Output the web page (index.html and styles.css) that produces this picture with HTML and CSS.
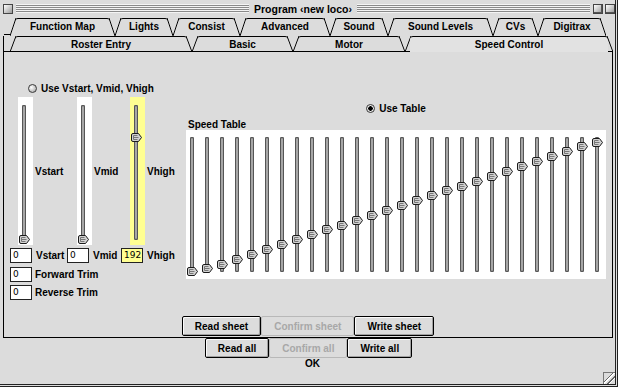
FILE: index.html
```html
<!DOCTYPE html>
<html lang="en">
<head>
  <meta charset="UTF-8">
  <title>Program ‹new loco›</title>
  <link rel="stylesheet" href="styles.css">
</head>
<body>
<svg class="defs" aria-hidden="true">
  <symbol id="thumb" viewBox="0 0 11 9">
    <path d="M0.5 2 Q0.5 0.5 2 0.5 H7.5 L10.5 4.5 L7.5 8.5 H2 Q0.5 8.5 0.5 7 Z" fill="#d2d2d2" stroke="#1a1a1a"/>
    <path d="M2.5 2.5 H6.5 M2.5 4.5 H7.5 M2.5 6.5 H6.5 M2.5 2.5 V6.5" stroke="#777" fill="none"/>
  </symbol>
</svg>

<div class="window">
  <div class="titlebar">
    <span class="close-box"></span>
    <span class="stripes"></span>
    <span class="title">Program ‹new loco›</span>
    <span class="stripes"></span>
    <span class="zoom-box"></span>
    <span class="collapse-box"></span>
  </div>

  <div class="tab-row back">
    <div class="tab"><span>Function Map</span></div>
    <div class="tab"><span>Lights</span></div>
    <div class="tab"><span>Consist</span></div>
    <div class="tab"><span>Advanced</span></div>
    <div class="tab"><span>Sound</span></div>
    <div class="tab"><span>Sound Levels</span></div>
    <div class="tab"><span>CVs</span></div>
    <div class="tab"><span>Digitrax</span></div>
  </div>
  <div class="tab-row front">
    <div class="tab"><span>Roster Entry</span></div>
    <div class="tab"><span>Basic</span></div>
    <div class="tab"><span>Motor</span></div>
    <div class="tab active"><span>Speed Control</span></div>
  </div>

  <div class="panel">
    <div class="panel-body">
      <div class="vcontrols">
        <div class="radio"><span class="radio-dot"></span>Use Vstart, Vmid, Vhigh</div>

        <div class="vsliders">
          <div class="slider-box"><div class="track"><svg class="thumb" style="top:130px"><use href="#thumb"/></svg></div></div>
          <span class="slider-label">Vstart</span>
          <div class="slider-box"><div class="track"><svg class="thumb" style="top:130px"><use href="#thumb"/></svg></div></div>
          <span class="slider-label">Vmid</span>
          <div class="slider-box high"><div class="track"><svg class="thumb" style="top:28px"><use href="#thumb"/></svg></div></div>
          <span class="slider-label">Vhigh</span>
        </div>

        <div class="field-row">
          <span class="field">0</span><span class="field-label">Vstart</span>
          <span class="field">0</span><span class="field-label">Vmid</span>
          <span class="field high">192</span><span class="field-label">Vhigh</span>
        </div>
        <div class="trim-row"><span class="field">0</span><span class="field-label">Forward Trim</span></div>
        <div class="trim-row reverse"><span class="field">0</span><span class="field-label">Reverse Trim</span></div>
      </div>

      <div class="table-col">
        <div class="radio centered"><span class="radio-dot on"></span>Use Table</div>
        <div class="table-title">Speed Table</div>
        <div class="table-box">
          <div class="track"><svg class="thumb" style="top:130px"><use href="#thumb"/></svg></div>
          <div class="track"><svg class="thumb" style="top:127px"><use href="#thumb"/></svg></div>
          <div class="track"><svg class="thumb" style="top:123px"><use href="#thumb"/></svg></div>
          <div class="track"><svg class="thumb" style="top:118px"><use href="#thumb"/></svg></div>
          <div class="track"><svg class="thumb" style="top:113px"><use href="#thumb"/></svg></div>
          <div class="track"><svg class="thumb" style="top:108px"><use href="#thumb"/></svg></div>
          <div class="track"><svg class="thumb" style="top:103px"><use href="#thumb"/></svg></div>
          <div class="track"><svg class="thumb" style="top:98px"><use href="#thumb"/></svg></div>
          <div class="track"><svg class="thumb" style="top:93px"><use href="#thumb"/></svg></div>
          <div class="track"><svg class="thumb" style="top:88px"><use href="#thumb"/></svg></div>
          <div class="track"><svg class="thumb" style="top:84px"><use href="#thumb"/></svg></div>
          <div class="track"><svg class="thumb" style="top:79px"><use href="#thumb"/></svg></div>
          <div class="track"><svg class="thumb" style="top:74px"><use href="#thumb"/></svg></div>
          <div class="track"><svg class="thumb" style="top:69px"><use href="#thumb"/></svg></div>
          <div class="track"><svg class="thumb" style="top:64px"><use href="#thumb"/></svg></div>
          <div class="track"><svg class="thumb" style="top:59px"><use href="#thumb"/></svg></div>
          <div class="track"><svg class="thumb" style="top:54px"><use href="#thumb"/></svg></div>
          <div class="track"><svg class="thumb" style="top:49px"><use href="#thumb"/></svg></div>
          <div class="track"><svg class="thumb" style="top:45px"><use href="#thumb"/></svg></div>
          <div class="track"><svg class="thumb" style="top:40px"><use href="#thumb"/></svg></div>
          <div class="track"><svg class="thumb" style="top:35px"><use href="#thumb"/></svg></div>
          <div class="track"><svg class="thumb" style="top:30px"><use href="#thumb"/></svg></div>
          <div class="track"><svg class="thumb" style="top:25px"><use href="#thumb"/></svg></div>
          <div class="track"><svg class="thumb" style="top:20px"><use href="#thumb"/></svg></div>
          <div class="track"><svg class="thumb" style="top:15px"><use href="#thumb"/></svg></div>
          <div class="track"><svg class="thumb" style="top:10px"><use href="#thumb"/></svg></div>
          <div class="track"><svg class="thumb" style="top:5px"><use href="#thumb"/></svg></div>
          <div class="track"><svg class="thumb" style="top:1px"><use href="#thumb"/></svg></div>
        </div>
      </div>
    </div>

    <div class="button-row sheet">
      <button class="btn">Read sheet</button>
      <button class="btn disabled">Confirm sheet</button>
      <button class="btn">Write sheet</button>
    </div>
  </div>

  <div class="button-row all">
    <button class="btn">Read all</button>
    <button class="btn disabled">Confirm all</button>
    <button class="btn">Write all</button>
  </div>
  <div class="ok">OK</div>

  <span class="grip"></span>
</div>
</body>
</html>
```

FILE: styles.css
```css
html, body {
  margin: 0;
  padding: 0;
  background: #dcdcdc;
  overflow: hidden;
  font-family: 'Liberation Sans', Arial, sans-serif;
  font-size: 10px;
  font-weight: bold;
  color: #000;
}
.defs {
  position: absolute;
  width: 0;
  height: 0;
}

.window {
  position: relative;
  width: 618px;
  height: 387px;
  box-sizing: border-box;
  background: #dcdcdc;
  border-right: 3px double #222;
  border-bottom: 3px double #222;
  display: flex;
  flex-direction: column;
}

/* title bar */
.titlebar {
  height: 17px;
  display: flex;
  align-items: center;
  gap: 3px;
  padding: 0 0 0 3px;
}
.close-box, .zoom-box, .collapse-box {
  width: 8px;
  height: 8px;
  border: 1px solid #444;
  background: linear-gradient(135deg, #fff, #9a9a9a);
  flex: none;
}
.zoom-box { box-shadow: inset -3px -3px 0 -2px #555; }
.collapse-box { box-shadow: inset 0 -4px 0 -3px #555; margin-left: -1px; }
.stripes {
  flex: 1;
  height: 9px;
  background: repeating-linear-gradient(to bottom, #f4f4f4 0 1px, #8a8a8a 1px 2px);
}
.title {
  font-size: 10.5px;
  padding: 0 2px;
}

/* tabs */
.tab-row {
  display: grid;
}
.tab-row.back {
  height: 18px;
  margin: 1px 0 0 10px;
  grid-template-columns: 105px 58px 67px 90px 58px 105px 45px 68px;
}
.tab-row.front {
  position: relative;
  height: 15px;
  margin-left: 3px;
  padding-left: 6px;
  border-left: 1px solid #000;
  grid-template-columns: 182px 101px 112px 208px;
}
.tab-row.front::before {
  content: '';
  position: absolute;
  left: 0;
  top: -2px;
  width: 7px;
  height: 1px;
  background: #000;
}
.tab {
  position: relative;
  padding: 0 5px;
}
.tab::before, .tab::after {
  content: '';
  position: absolute;
  top: 0;
  bottom: 0;
  width: 6px;
}
.tab::before {
  left: 0;
  background: linear-gradient(to bottom right, transparent calc(50% - 0.9px), #000 50%, transparent calc(50% + 0.9px));
}
.tab::after {
  right: 0;
  background: linear-gradient(to bottom left, transparent calc(50% - 0.9px), #000 50%, transparent calc(50% + 0.9px));
}
.tab span {
  display: block;
  height: 100%;
  box-sizing: border-box;
  border-top: 1px solid #000;
  border-radius: 3px 3px 0 0;
  text-align: center;
  line-height: 15px;
  white-space: nowrap;
}
.tab.active span {
  position: relative;
  background: #e2e2e2;
}
.tab.active span::after {
  content: '';
  position: absolute;
  left: -4px;
  right: -4px;
  bottom: -1px;
  height: 1px;
  background: #dcdcdc;
}

/* panel */
.panel {
  height: 287px;
  width: 610px;
  box-sizing: border-box;
  margin-left: 3px;
  border: 1px solid #000;
  display: flex;
  flex-direction: column;
}
.panel-body {
  display: grid;
  grid-template-columns: 182px 420px;
}
.vcontrols {
  padding: 31px 0 0 6px;
}
.radio {
  height: 11px;
  display: flex;
  align-items: center;
  gap: 4px;
  margin-left: 18px;
  white-space: nowrap;
}
.radio.centered {
  justify-content: center;
  margin-left: 0;
}
.radio-dot {
  width: 9px;
  height: 9px;
  box-sizing: border-box;
  border-radius: 50%;
  border: 1px solid #3a3a3a;
  background: radial-gradient(circle at 35% 35%, #fff, #9c9c9c);
}
.radio-dot.on {
  background: radial-gradient(circle, #000 0 2px, #e8e8e8 2.5px);
}

.vsliders {
  display: grid;
  grid-template-columns: 15px 44px 15px 38px 15px auto;
  align-items: center;
  margin: 3px 0 0 8px;
}
.slider-box {
  width: 15px;
  height: 148px;
  box-sizing: border-box;
  padding: 8px 0 0 4px;
  background: #fff;
}
.slider-box.high {
  background: #ffff92;
}
.slider-label {
  padding-left: 2px;
}

.track {
  position: relative;
  width: 4px;
  height: 135px;
  flex: none;
  background: #a6a6a6;
  border-radius: 2px;
  box-shadow: inset 1px 0 #555, inset -1px 0 #555, inset 0 1px #555, inset 0 -1px #555;
}
.thumb {
  position: absolute;
  left: -3px;
  width: 11px;
  height: 9px;
}

.field-row {
  display: grid;
  grid-template-columns: 22px 35px 22px 32px 22px auto;
  align-items: center;
  margin-top: 3px;
}
.field {
  width: 22px;
  height: 15px;
  box-sizing: border-box;
  border: 1px solid #222;
  background: #fff;
  padding-left: 2px;
  font-family: 'DejaVu Sans', sans-serif;
  font-size: 9px;
  font-weight: normal;
  line-height: 13px;
}
.field.high {
  background: #ffff92;
}
.field-label {
  padding-left: 4px;
  white-space: nowrap;
}
.trim-row {
  display: flex;
  align-items: center;
  margin-top: 4px;
}
.trim-row.reverse {
  margin-top: 3px;
}
.trim-row .field-label {
  padding-left: 3px;
}

.table-col {
  padding-top: 51px;
}
.table-title {
  height: 11px;
  line-height: 11px;
  margin: 5px 0 0 2px;
}
.table-box {
  width: 420px;
  height: 149px;
  box-sizing: border-box;
  padding: 7px 0 0 4px;
  background: #fff;
  display: flex;
  gap: 11px;
}

/* buttons */
.button-row {
  display: flex;
  justify-content: center;
}
.button-row.sheet {
  margin-top: auto;
  padding-bottom: 1px;
}
.button-row.all {
  padding-left: 2px;
}
.btn {
  height: 20px;
  box-sizing: border-box;
  padding: 0 12px;
  border: 1px solid #000;
  border-radius: 2px;
  background: #dcdcdc;
  box-shadow: inset 1px 1px #fafafa, inset -1px -1px #a0a0a0;
  font-family: 'Liberation Sans', Arial, sans-serif;
  font-size: 10px;
  font-weight: bold;
  color: #000;
  cursor: pointer;
}
.btn.disabled {
  border-color: #b8b8b8;
  box-shadow: none;
  color: #a8a8a8;
  cursor: default;
}
.ok {
  text-align: center;
  padding-left: 10px;
  line-height: 11px;
}

.grip {
  position: absolute;
  right: 0;
  bottom: 0;
  width: 11px;
  height: 11px;
  border-top: 1px solid #777;
  border-left: 1px solid #777;
  background: linear-gradient(135deg, transparent 38%, #666 38% 45%, #fff 45% 52%, transparent 52% 62%, #666 62% 69%, #fff 69% 76%, transparent 76%);
}
```
